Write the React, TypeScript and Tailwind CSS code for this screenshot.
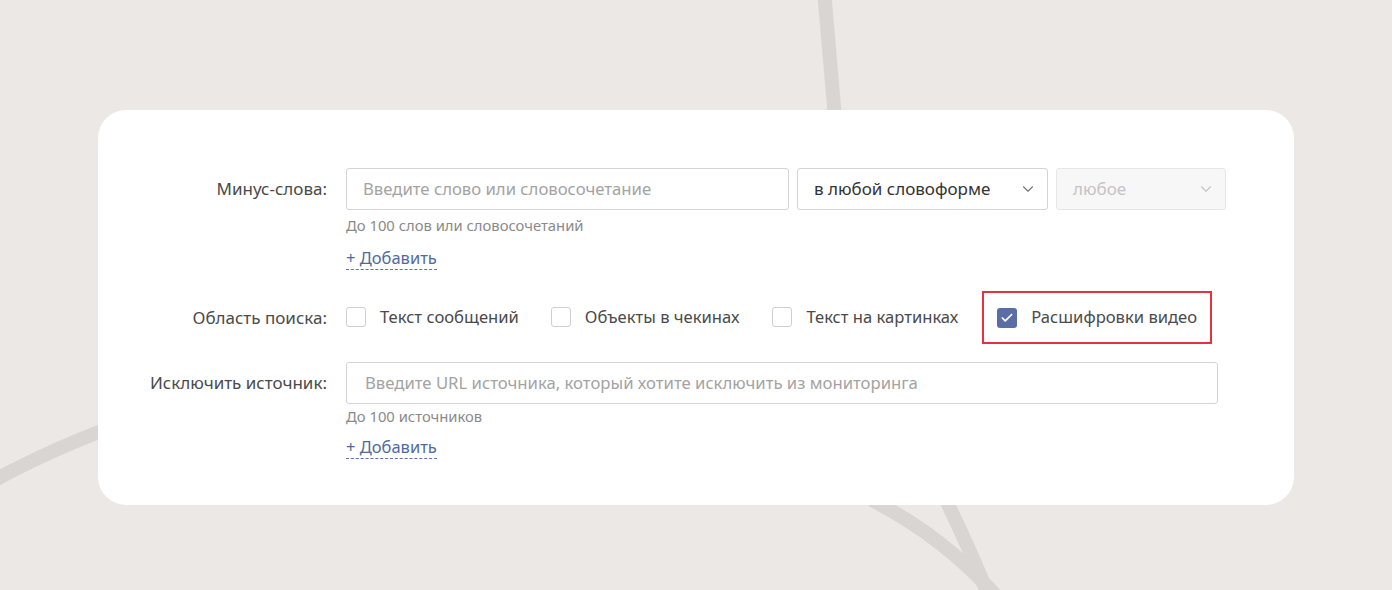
import { ChevronDown, Check } from 'lucide-react';

function Box({ checked = false }: { checked?: boolean }) {
  if (checked) {
    return (
      <span className="flex h-[20px] w-[20px] shrink-0 items-center justify-center rounded-[3px] bg-[#5a6ea5]">
        <Check className="h-[14px] w-[14px] text-white" strokeWidth={3} />
      </span>
    );
  }
  return <span className="h-[20px] w-[20px] shrink-0 rounded-[3px] border border-[#cfcfcf] bg-white" />;
}

function AddLink() {
  return (
    <span className="border-b border-dashed border-[#5b75a8] text-[16.5px] leading-[20px] text-[#4f6a9e]">
      + Добавить
    </span>
  );
}

export default function App() {
  return (
    <div className="relative h-[590px] w-full overflow-hidden bg-[#ece8e5] font-['Noto_Sans',sans-serif]">
      <svg className="absolute inset-0 h-full w-full" viewBox="0 0 1392 590" fill="none">
        <path d="M824 -10 C828 40 832 80 836 130" stroke="#d9d5d2" strokeWidth="14" />
        <path d="M-20 488 C20 466 60 446 120 424" stroke="#d9d5d2" strokeWidth="14" />
        <path d="M872 500 C920 525 960 555 1000 600" stroke="#d9d5d2" strokeWidth="14" />
        <path d="M946 500 C960 530 975 560 990 600" stroke="#d9d5d2" strokeWidth="14" />
      </svg>

      <div className="relative ml-[98px] mt-[110px] h-[395px] w-[1196px] rounded-[28px] bg-white pt-[58px]">
        <div className="grid grid-cols-[229px_1fr] gap-x-[19px] text-[#4a4a4a]">
          {/* Минус-слова */}
          <div className="flex h-[42px] items-center justify-end text-[17px]">Минус-слова:</div>
          <div>
            <div className="flex gap-[8px]">
              <div className="flex h-[42px] w-[443px] items-center rounded-[3px] border border-[#d4d4d4] px-[16px] text-[16.7px] text-[#a3a3a3]">
                Введите слово или словосочетание
              </div>
              <div className="flex h-[42px] w-[251px] items-center justify-between rounded-[3px] border border-[#d4d4d4] pl-[16px] pr-[10px] text-[17px] text-[#333]">
                в любой словоформе
                <ChevronDown className="h-[18px] w-[18px] text-[#777]" strokeWidth={1.5} />
              </div>
              <div className="flex h-[42px] w-[170px] items-center justify-between rounded-[3px] border border-[#e6e6e6] bg-[#f7f7f7] pl-[16px] pr-[10px] text-[17px] text-[#c4c4c4]">
                любое
                <ChevronDown className="h-[18px] w-[18px] text-[#c4c4c4]" strokeWidth={1.5} />
              </div>
            </div>
            <div className="mt-[6px] text-[14.8px] leading-[18px] text-[#8a8a8a]">До 100 слов или словосочетаний</div>
            <div className="mt-[12px]">
              <AddLink />
            </div>
          </div>

          {/* Область поиска */}
          <div className="mt-[21px] flex h-[53px] items-center justify-end text-[17px]">Область поиска:</div>
          <div className="mt-[21px] flex h-[53px] items-center text-[16.6px]">
            <label className="flex items-center gap-[14px]">
              <Box />
              <span>Текст сообщений</span>
            </label>
            <label className="ml-[32px] flex items-center gap-[14px]">
              <Box />
              <span>Объекты в чекинах</span>
            </label>
            <label className="ml-[33px] flex items-center gap-[14px]">
              <Box />
              <span>Текст на картинках</span>
            </label>
            <label className="ml-[24px] flex h-[53px] w-[230px] items-center gap-[14px] border-2 border-[#e5323f] pl-[13px]">
              <Box checked />
              <span>Расшифровки видео</span>
            </label>
          </div>

          {/* Исключить источник */}
          <div className="mt-[18px] flex h-[42px] items-center justify-end text-[17px]">Исключить источник:</div>
          <div className="mt-[18px]">
            <div className="flex h-[42px] w-[872px] items-center rounded-[3px] border border-[#d4d4d4] px-[18px] text-[16.7px] text-[#a3a3a3]">
              Введите URL источника, который хотите исключить из мониторинга
            </div>
            <div className="mt-[3px] text-[14.8px] leading-[18px] text-[#8a8a8a]">До 100 источников</div>
            <div className="mt-[10px]">
              <AddLink />
            </div>
          </div>
        </div>
      </div>
    </div>
  );
}
